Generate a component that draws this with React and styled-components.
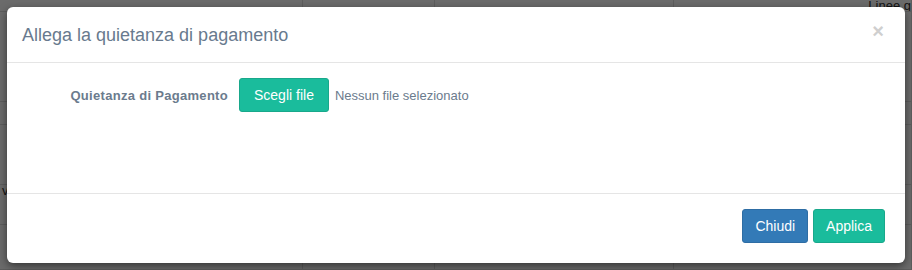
import React from "react";
import styled, { createGlobalStyle } from "styled-components";

const Global = createGlobalStyle`
  html, body { margin: 0; padding: 0; }
  body {
    width: 912px; height: 270px; overflow: hidden;
    font-family: "Liberation Sans", Arial, sans-serif;
    background: #fff;
  }
`;

const Page = styled.div`
  position: relative;
  width: 912px;
  height: 270px;
  overflow: hidden;
`;

const BgTable = styled.div`
  display: grid;
  grid-template-columns: 303px 132px 1fr 1fr;
  grid-template-rows: 12px 90px 23px 60px 40px 45px;
  font-size: 13px;
  color: #333;
`;

const BgCell = styled.div`
  border-bottom: 1px solid #ddd;
  border-right: 1px solid #ddd;
  padding-left: 2px;
  text-align: ${(p) => p.$align || "left"};
  line-height: 12px;
  white-space: nowrap;
  overflow: hidden;
`;

const Backdrop = styled.div`
  position: absolute;
  inset: 0;
  background: rgba(0, 0, 0, 0.58);
`;

const Dialog = styled.div`
  position: absolute;
  left: 7px;
  top: 7px;
  width: 898px;
  height: 256px;
  background: #fff;
  border-radius: 6px;
  box-shadow: 0 3px 9px rgba(0, 0, 0, 0.5);
  display: flex;
  flex-direction: column;
  overflow: hidden;
`;

const Header = styled.div`
  display: flex;
  align-items: center;
  justify-content: space-between;
  padding: 15px 15px 14px 15px;
  height: 56px;
  box-sizing: border-box;
  border-bottom: 1px solid #e5e5e5;
`;

const Title = styled.h4`
  margin: 0;
  font-size: 18px;
  font-weight: 400;
  color: #687a8e;
  line-height: 26px;
`;

const Close = styled.button`
  border: 0;
  background: none;
  padding: 0;
  margin-right: 6px;
  margin-top: -8px;
  font-family: "Liberation Sans", Arial, sans-serif;
  font-size: 20px;
  font-weight: 700;
  line-height: 1;
  color: #cfcfcf;
  cursor: pointer;
`;

const Body = styled.div`
  height: 131px;
  box-sizing: border-box;
  padding: 15px;
  border-bottom: 1px solid #e5e5e5;
`;

const Row = styled.div`
  display: flex;
  align-items: center;
  gap: 6px;
`;

const Label = styled.label`
  width: 211px;
  text-align: right;
  font-size: 13px;
  font-weight: 700;
  letter-spacing: 0.3px;
  color: #6b7b8d;
  padding-right: 5px;
  box-sizing: border-box;
`;

const Btn = styled.button`
  height: 34px;
  padding: 0 ${(p) => p.$px || 14}px;
  border-radius: 3px;
  border: 1px solid ${(p) => (p.$variant === "blue" ? "#2e6da4" : "#19a88b")};
  background: ${(p) => (p.$variant === "blue" ? "#337ab7" : "#1abc9c")};
  color: #fff;
  font-family: "Liberation Sans", Arial, sans-serif;
  font-size: 14px;
  line-height: 20px;
  cursor: pointer;
`;

const NoFile = styled.span`
  font-size: 13px;
  color: #6b7b8d;
`;

const Footer = styled.div`
  flex: 1;
  display: flex;
  justify-content: flex-end;
  align-items: flex-start;
  gap: 5px;
  padding: 15px 20px 0 0;
`;

const cells = [
  ["", "", "", "Linee g"],
  ["", "", "", ""],
  ["", "", "", ""],
  ["", "", "", ""],
  ["v", "", "", ""],
  ["", "", "", ""],
];

export default function App() {
  return (
    <Page>
      <Global />
      <BgTable>
        {cells.flatMap((r, i) =>
          r.map((c, j) => (
            <BgCell key={`${i}-${j}`} $align={j === 3 && i === 0 ? "right" : "left"}>
              {c}
            </BgCell>
          ))
        )}
      </BgTable>
      <Backdrop />
      <Dialog>
        <Header>
          <Title>Allega la quietanza di pagamento</Title>
          <Close aria-label="Close">×</Close>
        </Header>
        <Body>
          <Row>
            <Label>Quietanza di Pagamento</Label>
            <Btn $px={14}>Scegli file</Btn>
            <NoFile>Nessun file selezionato</NoFile>
          </Row>
        </Body>
        <Footer>
          <Btn $variant="blue" $px={12}>Chiudi</Btn>
          <Btn $px={12}>Applica</Btn>
        </Footer>
      </Dialog>
    </Page>
  );
}
